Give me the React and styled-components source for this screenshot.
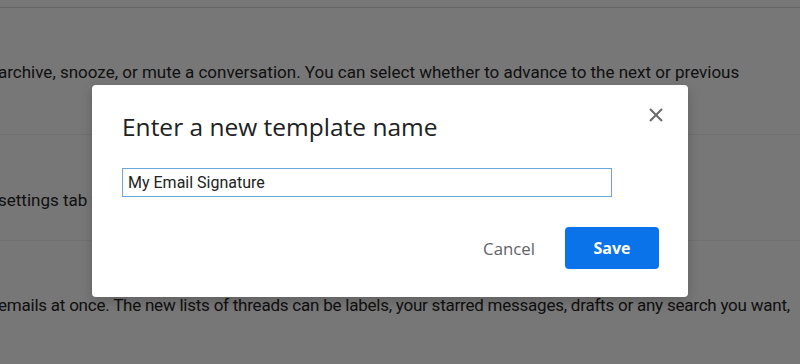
import React from 'react';
import styled, { createGlobalStyle } from 'styled-components';

const GlobalStyle = createGlobalStyle`
  body {
    margin: 0;
    background: #767676;
  }
`;

const Page = styled.div`
  position: relative;
  width: 800px;
  height: 364px;
  overflow: hidden;
  background: #fff;
  font-family: Roboto, 'Liberation Sans', sans-serif;
`;

const SettingsList = styled.div`
  padding-top: 7px;
`;

const SettingRow = styled.div`
  height: ${props => props.height}px;
  padding-top: ${props => props.offset}px;
  border-top: 1px solid ${props => props.line};
  box-sizing: border-box;
`;

const SettingText = styled.p`
  margin: 0 0 0 -2px;
  font-size: 17px;
  line-height: 20px;
  letter-spacing: ${props => props.tight || 0}px;
  color: #262626;
  white-space: nowrap;
`;

const Overlay = styled.div`
  position: absolute;
  inset: 0;
  background: rgba(0, 0, 0, 0.535);
`;

const Dialog = styled.div`
  position: absolute;
  left: 92px;
  top: 85px;
  width: 596px;
  box-sizing: border-box;
  padding: 26px 25px 28px 30px;
  background: #fff;
  border-radius: 4px;
  box-shadow: 0 4px 12px rgba(0, 0, 0, 0.2);
`;

const Header = styled.div`
  display: flex;
  justify-content: space-between;
  align-items: flex-start;
`;

const Title = styled.h2`
  margin: 0;
  font-family: 'Open Sans', Lato, sans-serif;
  font-weight: 400;
  font-size: 24.5px;
  line-height: 32px;
  color: #202124;
`;

const CloseButton = styled.button`
  display: flex;
  padding: 0;
  margin-top: -3px;
  border: 0;
  background: none;
  cursor: pointer;
`;

const NameInput = styled.input`
  display: block;
  width: 490px;
  height: 29px;
  margin-top: 25px;
  padding: 0 5px;
  box-sizing: border-box;
  border: 1px solid #6aa6df;
  outline: none;
  font-family: Roboto, 'Liberation Sans', sans-serif;
  font-size: 16px;
  color: #222;
`;

const Footer = styled.div`
  display: flex;
  justify-content: flex-end;
  align-items: center;
  gap: 28px;
  margin-top: 30px;
  padding-right: 4px;
`;

const Button = styled.button`
  height: 42px;
  padding: 0 ${props => (props.primary ? 0 : 2)}px;
  width: ${props => (props.primary ? '94px' : 'auto')};
  border: 0;
  border-radius: 4px;
  background: ${props => (props.primary ? '#0b73e9' : 'transparent')};
  color: ${props => (props.primary ? '#fff' : '#5f6368')};
  font-family: 'Open Sans', Lato, sans-serif;
  font-size: ${props => (props.primary ? 16 : 16.8)}px;
  font-weight: ${props => (props.primary ? 700 : 400)};
  cursor: pointer;
`;

const CloseIcon = () => (
  <svg width="14" height="14" viewBox="0 0 14 14">
    <path d="M1 1L13 13M13 1L1 13" stroke="#6b6b6b" strokeWidth="2" fill="none" />
  </svg>
);

export default function App() {
  return (
    <Page>
      <GlobalStyle />
      <SettingsList>
        <SettingRow height={127} offset={54} line="#d6d6d6">
          <SettingText>
            archive, snooze, or mute a conversation. You can select whether to advance to the next or previous
          </SettingText>
        </SettingRow>
        <SettingRow height={106} offset={55} line="#eeeeee">
          <SettingText>settings tab from the settings menu and all of your labs are here.</SettingText>
        </SettingRow>
        <SettingRow height={130} offset={54} line="#f2f2f2">
          <SettingText tight={-0.23}>
            emails at once. The new lists of threads can be labels, your starred messages, drafts or any search you want,
          </SettingText>
        </SettingRow>
      </SettingsList>
      <Overlay />
      <Dialog role="dialog">
        <Header>
          <Title>Enter a new template name</Title>
          <CloseButton aria-label="Close">
            <CloseIcon />
          </CloseButton>
        </Header>
        <NameInput defaultValue="My Email Signature" />
        <Footer>
          <Button>Cancel</Button>
          <Button primary>Save</Button>
        </Footer>
      </Dialog>
    </Page>
  );
}
